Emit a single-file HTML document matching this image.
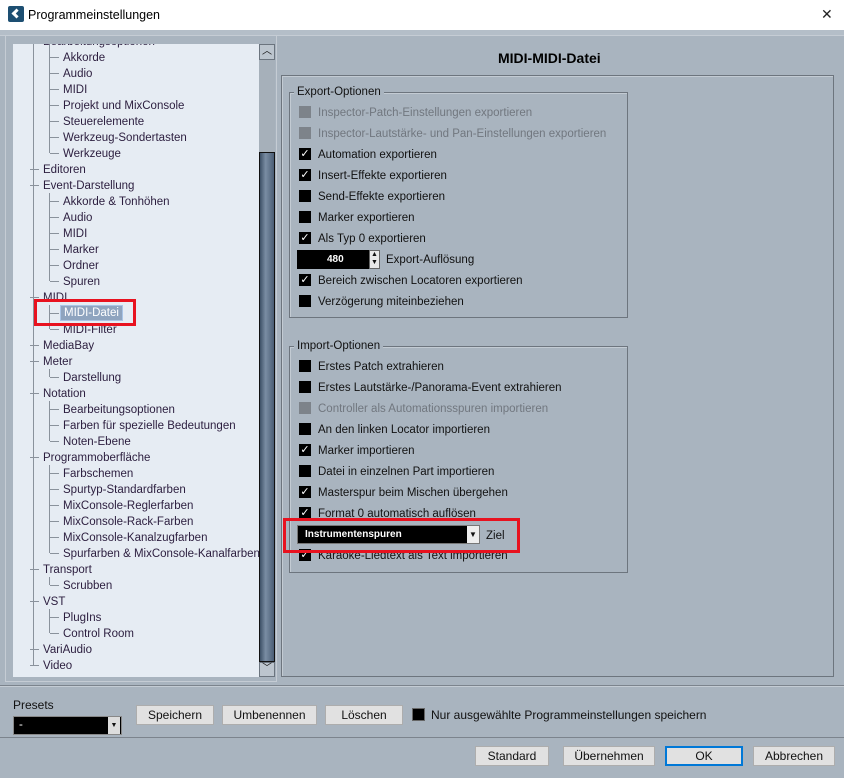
<!DOCTYPE html>
<html><head><meta charset="utf-8"><style>
*{margin:0;padding:0;box-sizing:border-box}
body{width:844px;height:778px;background:#a9b4bf;font-family:"Liberation Sans",sans-serif;font-size:11.5px;color:#111;position:relative;overflow:hidden}
.a{position:absolute;white-space:nowrap}
#title{left:0;top:0;width:844px;height:30px;background:#fff}
.tr{position:absolute;height:16px;line-height:18px;color:#2b1d3e;font-size:11.5px;white-space:nowrap}
.h{position:absolute;height:1px;background:#8a929c}
.v{position:absolute;width:1px;background:#8a929c}
.cb{position:absolute;width:12px;height:12px;background:#000;left:299px;color:#fff;font-size:11px;font-weight:bold;line-height:12px;text-align:center;font-family:"DejaVu Sans",sans-serif}
.cb.d{background:#7d838a}
.lb{position:absolute;left:318px;height:14px;line-height:16px;white-space:nowrap}
.lb.d{color:#71777f}
.box{position:absolute;border:1px solid #6d757e;box-shadow:1px 1px 0 #c3cbd3 inset}
.leg{position:absolute;background:#a9b4bf;padding:0 3px;line-height:15px}
.btn{position:absolute;height:20px;background:#e1e1e1;border:1px solid #adadad;text-align:center;line-height:18px;font-size:12px}
</style></head><body>
<div class="a" id="title"></div>
<div class="a" style="left:8px;top:6px;width:16px;height:16px;background:#1d4f72;border-radius:2px"><div style="position:absolute;left:5px;top:4px;width:7px;height:7px;border-left:3px solid #fff;border-bottom:3px solid #fff;transform:rotate(45deg)"></div></div>
<div class="a" style="left:28px;top:8px;font-size:12.5px;color:#000">Programmeinstellungen</div>
<div class="a" style="left:821px;top:6px;font-size:14px;color:#222">✕</div>
<div class="a" style="left:0;top:30px;width:844px;height:6px;background:#b4bec8;border-bottom:1px solid #c5ccd4"></div>

<div class="a" style="left:5px;top:36px;width:272px;height:646px;border:1px solid #c5ccd4;border-top:none"></div>
<div class="a" style="left:13px;top:44px;width:246px;height:633px;background:#e6ecf3;overflow:hidden">
<div style="position:absolute;left:-13px;top:-44px;width:260px;height:700px">
<div class="v" style="left:33px;top:44px;height:621px"></div>
<div class="v" style="left:49px;top:44px;height:109px"></div>
<div class="v" style="left:49px;top:193px;height:88px"></div>
<div class="v" style="left:49px;top:305px;height:24px"></div>
<div class="v" style="left:49px;top:369px;height:8px"></div>
<div class="v" style="left:49px;top:401px;height:40px"></div>
<div class="v" style="left:49px;top:465px;height:88px"></div>
<div class="v" style="left:49px;top:577px;height:8px"></div>
<div class="v" style="left:49px;top:609px;height:24px"></div>
<div class="tr" style="left:43px;top:33px">Bearbeitungsoptionen</div>
<div class="h" style="left:50px;top:57px;width:9px"></div><div class="tr" style="left:63px;top:49px">Akkorde</div>
<div class="h" style="left:50px;top:73px;width:9px"></div><div class="tr" style="left:63px;top:65px">Audio</div>
<div class="h" style="left:50px;top:89px;width:9px"></div><div class="tr" style="left:63px;top:81px">MIDI</div>
<div class="h" style="left:50px;top:105px;width:9px"></div><div class="tr" style="left:63px;top:97px">Projekt und MixConsole</div>
<div class="h" style="left:50px;top:121px;width:9px"></div><div class="tr" style="left:63px;top:113px">Steuerelemente</div>
<div class="h" style="left:50px;top:137px;width:9px"></div><div class="tr" style="left:63px;top:129px">Werkzeug-Sondertasten</div>
<div class="h" style="left:50px;top:153px;width:9px"></div><div class="tr" style="left:63px;top:145px">Werkzeuge</div>
<div class="h" style="left:30px;top:169px;width:9px"></div><div class="tr" style="left:43px;top:161px">Editoren</div>
<div class="h" style="left:30px;top:185px;width:9px"></div><div class="tr" style="left:43px;top:177px">Event-Darstellung</div>
<div class="h" style="left:50px;top:201px;width:9px"></div><div class="tr" style="left:63px;top:193px">Akkorde &amp; Tonhöhen</div>
<div class="h" style="left:50px;top:217px;width:9px"></div><div class="tr" style="left:63px;top:209px">Audio</div>
<div class="h" style="left:50px;top:233px;width:9px"></div><div class="tr" style="left:63px;top:225px">MIDI</div>
<div class="h" style="left:50px;top:249px;width:9px"></div><div class="tr" style="left:63px;top:241px">Marker</div>
<div class="h" style="left:50px;top:265px;width:9px"></div><div class="tr" style="left:63px;top:257px">Ordner</div>
<div class="h" style="left:50px;top:281px;width:9px"></div><div class="tr" style="left:63px;top:273px">Spuren</div>
<div class="h" style="left:30px;top:297px;width:9px"></div><div class="tr" style="left:43px;top:289px">MIDI</div>
<div class="h" style="left:50px;top:313px;width:9px"></div><div class="tr" style="left:60px;top:305px;background:#8fa4bf;color:#fff;padding:0 3px;border:1px solid #a9c4e6;line-height:15px">MIDI-Datei</div>
<div class="h" style="left:50px;top:329px;width:9px"></div><div class="tr" style="left:63px;top:321px">MIDI-Filter</div>
<div class="h" style="left:30px;top:345px;width:9px"></div><div class="tr" style="left:43px;top:337px">MediaBay</div>
<div class="h" style="left:30px;top:361px;width:9px"></div><div class="tr" style="left:43px;top:353px">Meter</div>
<div class="h" style="left:50px;top:377px;width:9px"></div><div class="tr" style="left:63px;top:369px">Darstellung</div>
<div class="h" style="left:30px;top:393px;width:9px"></div><div class="tr" style="left:43px;top:385px">Notation</div>
<div class="h" style="left:50px;top:409px;width:9px"></div><div class="tr" style="left:63px;top:401px">Bearbeitungsoptionen</div>
<div class="h" style="left:50px;top:425px;width:9px"></div><div class="tr" style="left:63px;top:417px">Farben für spezielle Bedeutungen</div>
<div class="h" style="left:50px;top:441px;width:9px"></div><div class="tr" style="left:63px;top:433px">Noten-Ebene</div>
<div class="h" style="left:30px;top:457px;width:9px"></div><div class="tr" style="left:43px;top:449px">Programmoberfläche</div>
<div class="h" style="left:50px;top:473px;width:9px"></div><div class="tr" style="left:63px;top:465px">Farbschemen</div>
<div class="h" style="left:50px;top:489px;width:9px"></div><div class="tr" style="left:63px;top:481px">Spurtyp-Standardfarben</div>
<div class="h" style="left:50px;top:505px;width:9px"></div><div class="tr" style="left:63px;top:497px">MixConsole-Reglerfarben</div>
<div class="h" style="left:50px;top:521px;width:9px"></div><div class="tr" style="left:63px;top:513px">MixConsole-Rack-Farben</div>
<div class="h" style="left:50px;top:537px;width:9px"></div><div class="tr" style="left:63px;top:529px">MixConsole-Kanalzugfarben</div>
<div class="h" style="left:50px;top:553px;width:9px"></div><div class="tr" style="left:63px;top:545px">Spurfarben &amp; MixConsole-Kanalfarben</div>
<div class="h" style="left:30px;top:569px;width:9px"></div><div class="tr" style="left:43px;top:561px">Transport</div>
<div class="h" style="left:50px;top:585px;width:9px"></div><div class="tr" style="left:63px;top:577px">Scrubben</div>
<div class="h" style="left:30px;top:601px;width:9px"></div><div class="tr" style="left:43px;top:593px">VST</div>
<div class="h" style="left:50px;top:617px;width:9px"></div><div class="tr" style="left:63px;top:609px">PlugIns</div>
<div class="h" style="left:50px;top:633px;width:9px"></div><div class="tr" style="left:63px;top:625px">Control Room</div>
<div class="h" style="left:30px;top:649px;width:9px"></div><div class="tr" style="left:43px;top:641px">VariAudio</div>
<div class="h" style="left:30px;top:665px;width:9px"></div><div class="tr" style="left:43px;top:657px">Video</div>
</div></div>
<div class="a" style="left:34px;top:299px;width:102px;height:27px;border:3px solid #e8121f"></div>
<div class="a" style="left:259px;top:44px;width:16px;height:633px;background:#a6b0ba"></div>
<div class="a" style="left:259px;top:44px;width:16px;height:16px;background:#bcc5ce;border:1px solid #6b747e;text-align:center;font-size:10px;line-height:14px">︿</div>
<div class="a" style="left:259px;top:152px;width:16px;height:510px;background:linear-gradient(90deg,#3e5167,#7a8da3 40%,#4b5e75);border:1px solid #111"></div>
<div class="a" style="left:259px;top:662px;width:16px;height:15px;background:#bcc5ce;border:1px solid #6b747e;text-align:center;font-size:10px;line-height:12px">﹀</div>

<div class="a" style="left:498px;top:50px;font-size:14px;font-weight:bold;color:#000">MIDI-MIDI-Datei</div>
<div class="box" style="left:281px;top:75px;width:553px;height:602px"></div>
<div class="box" style="left:289px;top:92px;width:339px;height:226px"></div>
<div class="leg" style="left:294px;top:85px">Export-Optionen</div>
<div class="cb d" style="top:106px"></div><div class="lb d" style="top:105px">Inspector-Patch-Einstellungen exportieren</div>
<div class="cb d" style="top:127px"></div><div class="lb d" style="top:126px">Inspector-Lautstärke- und Pan-Einstellungen exportieren</div>
<div class="cb" style="top:148px">✓</div><div class="lb" style="top:147px">Automation exportieren</div>
<div class="cb" style="top:169px">✓</div><div class="lb" style="top:168px">Insert-Effekte exportieren</div>
<div class="cb" style="top:190px"></div><div class="lb" style="top:189px">Send-Effekte exportieren</div>
<div class="cb" style="top:211px"></div><div class="lb" style="top:210px">Marker exportieren</div>
<div class="cb" style="top:232px">✓</div><div class="lb" style="top:231px">Als Typ 0 exportieren</div>
<div class="a" style="left:297px;top:250px;width:72px;height:19px;background:#000;color:#fff;font-weight:bold;font-size:10px;line-height:19px;padding-left:30px">480</div>
<div class="a" style="left:369px;top:250px;width:11px;height:19px;background:#e8e8e8;border:1px solid #666;font-size:7px;line-height:8px;text-align:center">▲<br>▼</div>
<div class="lb" style="left:386px;top:252px">Export-Auflösung</div>
<div class="cb" style="top:274px">✓</div><div class="lb" style="top:273px">Bereich zwischen Locatoren exportieren</div>
<div class="cb" style="top:295px"></div><div class="lb" style="top:294px">Verzögerung miteinbeziehen</div>

<div class="box" style="left:289px;top:346px;width:339px;height:227px"></div>
<div class="leg" style="left:294px;top:339px">Import-Optionen</div>
<div class="cb" style="top:360px"></div><div class="lb" style="top:359px">Erstes Patch extrahieren</div>
<div class="cb" style="top:381px"></div><div class="lb" style="top:380px">Erstes Lautstärke-/Panorama-Event extrahieren</div>
<div class="cb d" style="top:402px"></div><div class="lb d" style="top:401px">Controller als Automationsspuren importieren</div>
<div class="cb" style="top:423px"></div><div class="lb" style="top:422px">An den linken Locator importieren</div>
<div class="cb" style="top:444px">✓</div><div class="lb" style="top:443px">Marker importieren</div>
<div class="cb" style="top:465px"></div><div class="lb" style="top:464px">Datei in einzelnen Part importieren</div>
<div class="cb" style="top:486px">✓</div><div class="lb" style="top:485px">Masterspur beim Mischen übergehen</div>
<div class="cb" style="top:507px">✓</div><div class="lb" style="top:506px">Format 0 automatisch auflösen</div>
<div class="cb" style="top:549px">✓</div><div class="lb" style="top:548px">Karaoke-Liedtext als Text importieren</div>
<div class="a" style="left:297px;top:525px;width:183px;height:19px;background:#000;border:1px solid #777;color:#fff;font-weight:bold;font-size:10px;line-height:18px;padding-left:7px">Instrumentenspuren</div>
<div class="a" style="left:467px;top:526px;width:12px;height:17px;background:#eee;font-size:8px;line-height:17px;text-align:center">▼</div>
<div class="lb" style="left:486px;top:528px">Ziel</div>
<div class="a" style="left:283px;top:518px;width:237px;height:35px;border:3px solid #e8121f"></div>

<div class="a" style="left:0;top:685px;width:844px;height:1px;background:#7c848d"></div>
<div class="a" style="left:0;top:686px;width:844px;height:1px;background:#c4ccd4"></div>
<div class="a" style="left:13px;top:698px;font-size:12px">Presets</div>
<div class="a" style="left:13px;top:716px;width:109px;height:19px;background:#000;border:1px solid #888;color:#fff;padding-left:5px;line-height:16px">-</div>
<div class="a" style="left:108px;top:717px;width:12px;height:17px;background:#ddd;font-size:7px;line-height:18px;text-align:center">▼</div>
<div class="btn" style="left:136px;top:705px;width:78px">Speichern</div>
<div class="btn" style="left:222px;top:705px;width:95px">Umbenennen</div>
<div class="btn" style="left:325px;top:705px;width:78px">Löschen</div>
<div class="a" style="left:412px;top:708px;width:13px;height:13px;background:#000;border:1px solid #666"></div>
<div class="a" style="left:431px;top:708px;font-size:12px">Nur ausgewählte Programmeinstellungen speichern</div>
<div class="a" style="left:0;top:737px;width:844px;height:1px;background:#7c848d"></div>
<div class="btn" style="left:475px;top:746px;width:74px">Standard</div>
<div class="btn" style="left:563px;top:746px;width:92px">Übernehmen</div>
<div class="btn" style="left:665px;top:746px;width:78px;border:2px solid #0078d7;line-height:16px">OK</div>
<div class="btn" style="left:753px;top:746px;width:82px">Abbrechen</div>
</body></html>
